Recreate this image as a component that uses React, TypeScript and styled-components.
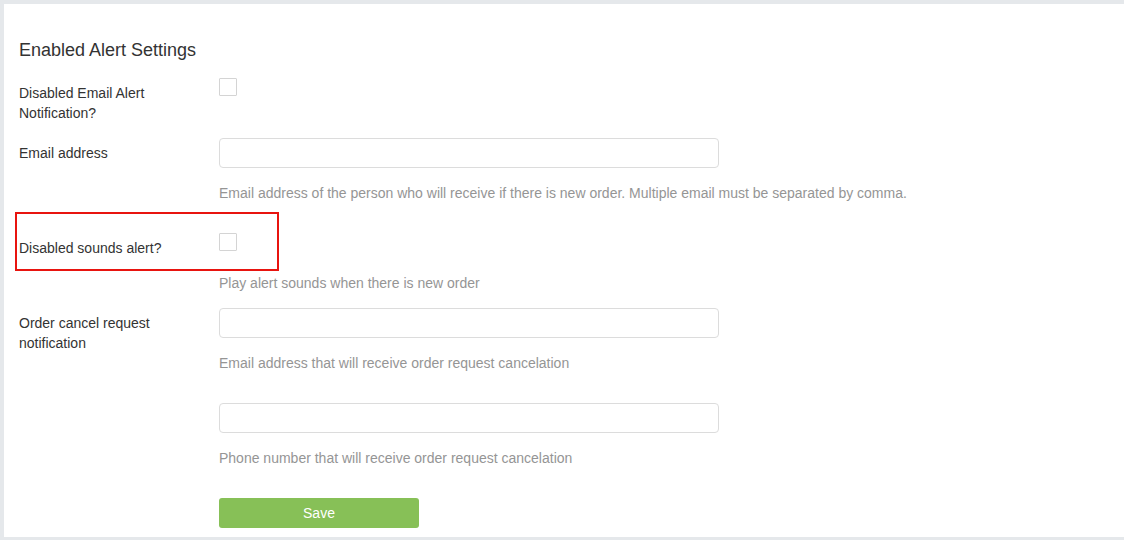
import styled, { createGlobalStyle } from "styled-components";

const GlobalStyle = createGlobalStyle`
  html, body {
    margin: 0;
    padding: 0;
    background: #e5e8eb;
  }
  body {
    font-family: "Liberation Sans", Arial, sans-serif;
    font-size: 14px;
    color: #333;
  }
`;

const Panel = styled.div`
  margin: 4px 0 0 4px;
  padding: 36px 15px 9px 15px;
  background: #fff;
`;

const Heading = styled.h3`
  margin: 0 0 18px 0;
  font-size: 18px;
  line-height: 20px;
  font-weight: normal;
  color: #333;
`;

const Group = styled.div<{ $top?: number }>`
  display: grid;
  grid-template-columns: 200px 500px;
  align-items: start;
  margin-top: ${(p) => p.$top ?? 0}px;
`;

const Label = styled.label`
  grid-column: 1;
  padding: 5px 30px 0 0;
  line-height: 20px;
  color: #333;
`;

const Field = styled.div`
  grid-column: 2;
  display: flex;
  flex-direction: column;
  align-items: flex-start;
`;

const Checkbox = styled.span`
  display: block;
  width: 16px;
  height: 16px;
  border: 1px solid #d4d4d4;
  border-radius: 1px;
  background: #fff;
`;

const Input = styled.input`
  box-sizing: border-box;
  width: 500px;
  height: 30px;
  margin: 0;
  padding: 0 10px;
  border: 1px solid #dcdcdc;
  border-radius: 4px;
  font: inherit;
  outline: none;
`;

const Help = styled.div<{ $top?: number }>`
  grid-column: 2;
  margin-top: ${(p) => p.$top ?? 15}px;
  line-height: 20px;
  color: #959595;
  white-space: nowrap;
`;

const Highlight = styled.div`
  grid-column: 1 / -1;
  justify-self: start;
  display: grid;
  grid-template-columns: 200px auto;
  align-items: start;
  box-sizing: border-box;
  width: 264px;
  margin-left: -4px;
  padding: 19px 0 11px 2px;
  border: 2px solid #e8140f;
`;

const SaveButton = styled.button`
  width: 200px;
  height: 30px;
  margin: 0;
  padding: 0;
  border: none;
  border-radius: 3px;
  background: #87c057;
  color: #fff;
  font: inherit;
  font-size: 14px;
  cursor: pointer;
`;

export default function App() {
  return (
    <>
      <GlobalStyle />
      <Panel>
        <Heading>Enabled Alert Settings</Heading>

        <Group>
          <Label>Disabled Email Alert Notification?</Label>
          <Field>
            <Checkbox />
          </Field>
        </Group>

        <Group $top={15}>
          <Label>Email address</Label>
          <Field>
            <Input />
            <Help>
              Email address of the person who will receive if there is new order. Multiple email must
              be separated by comma.
            </Help>
          </Field>
        </Group>

        <Group $top={9}>
          <Highlight>
            <Label>Disabled sounds alert?</Label>
            <Field>
              <Checkbox />
            </Field>
          </Highlight>
          <Help $top={2}>Play alert sounds when there is new order</Help>
        </Group>

        <Group $top={15}>
          <Label>Order cancel request notification</Label>
          <Field>
            <Input />
            <Help>Email address that will receive order request cancelation</Help>
          </Field>
        </Group>

        <Group $top={30}>
          <Field>
            <Input />
            <Help>Phone number that will receive order request cancelation</Help>
          </Field>
        </Group>

        <Group $top={30}>
          <Field>
            <SaveButton>Save</SaveButton>
          </Field>
        </Group>
      </Panel>
    </>
  );
}
